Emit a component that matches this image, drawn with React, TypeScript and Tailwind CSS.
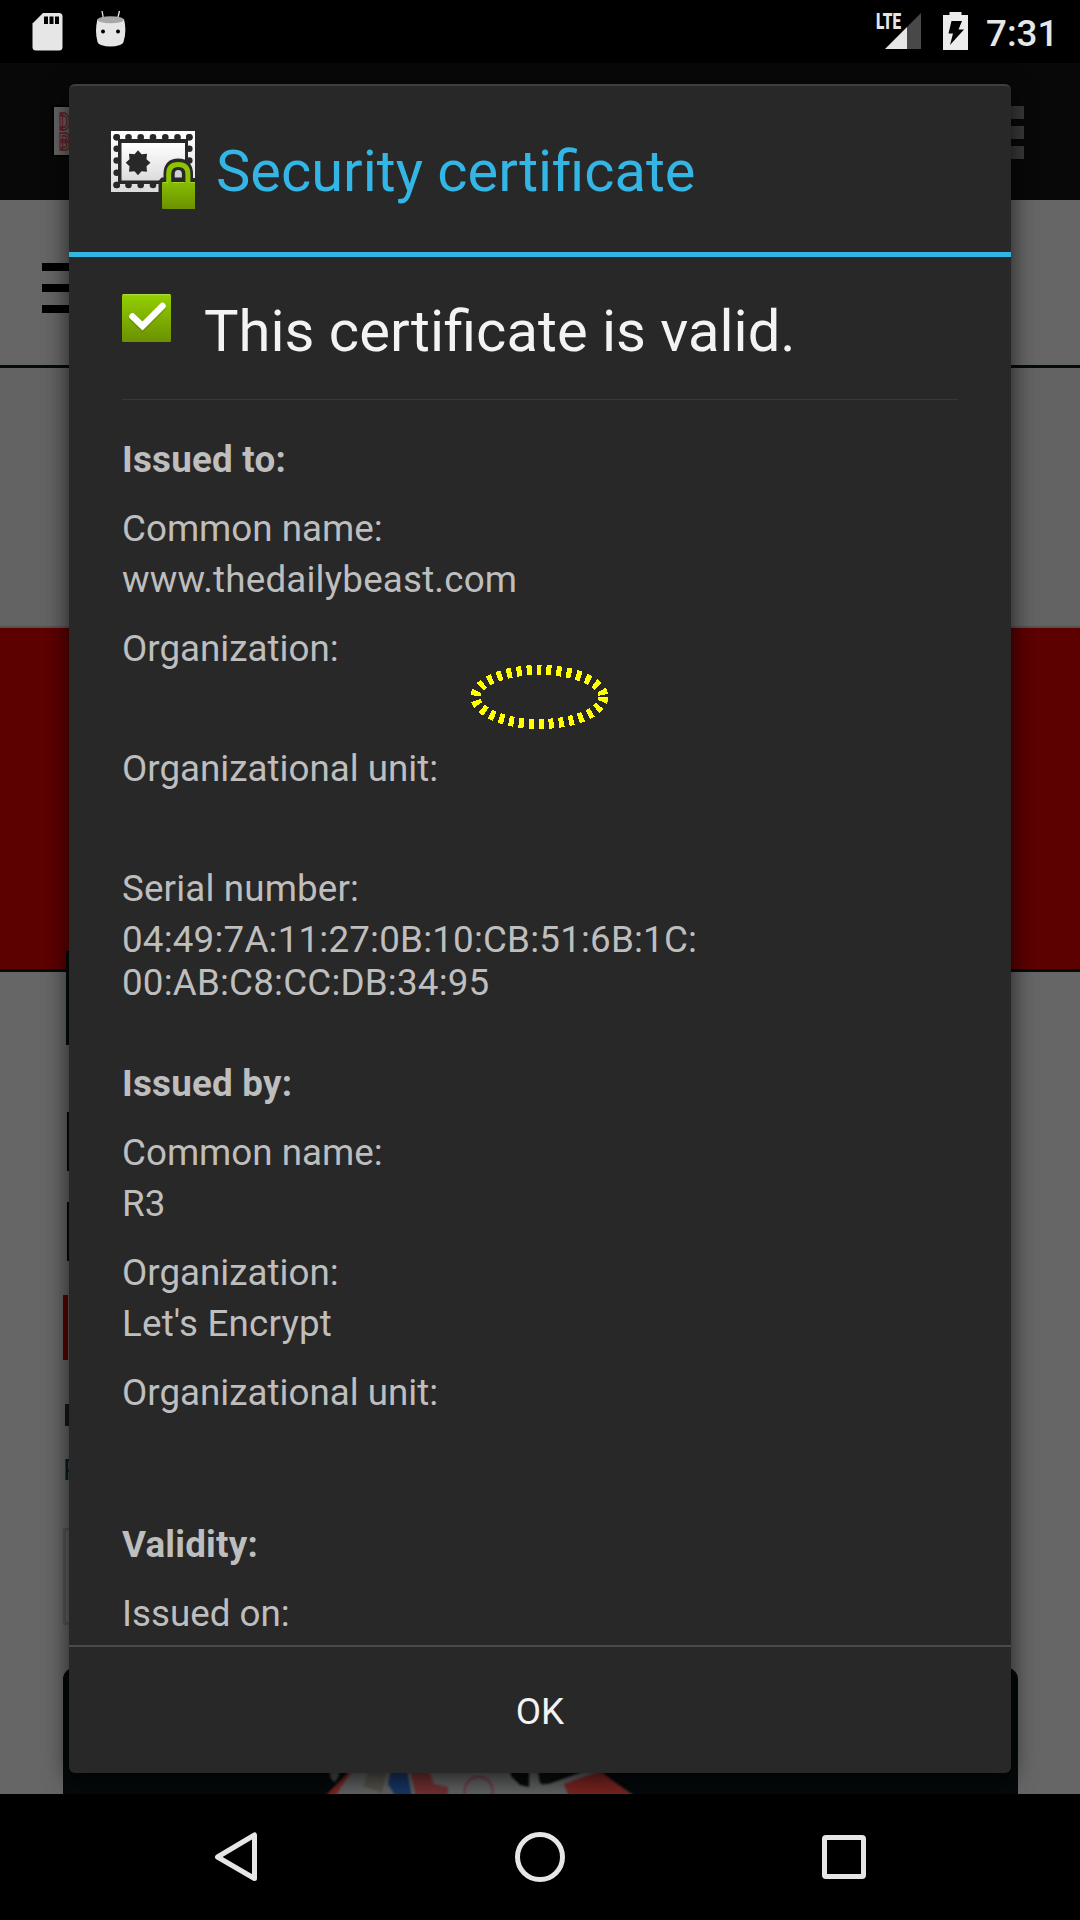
import React from "react";

type Line = { text: string; wide?: boolean };
type Entry = { label: string; wideLabel?: boolean; lines: Line[] };

const issuedTo: Entry[] = [
  { label: "Common name:", lines: [{ text: "www.thedailybeast.com", wide: true }] },
  { label: "Organization:", lines: [{ text: "" }] },
  { label: "Organizational unit:", lines: [{ text: "" }] },
  {
    label: "Serial number:",
    wideLabel: true,
    lines: [
      { text: "04:49:7A:11:27:0B:10:CB:51:6B:1C:", wide: true },
      { text: "00:AB:C8:CC:DB:34:95", wide: true },
    ],
  },
];
const issuedBy: Entry[] = [
  { label: "Common name:", lines: [{ text: "R3" }] },
  { label: "Organization:", lines: [{ text: "Let's Encrypt", wide: true }] },
  { label: "Organizational unit:", lines: [{ text: "" }] },
];
const validity: Entry[] = [{ label: "Issued on:", lines: [] }];

function Section({ title, entries }: { title: string; entries: Entry[] }) {
  return (
    <section className="flex flex-col gap-[26px]">
      <h3 className="font-bold tracking-[0.22px]">{title}</h3>
      {entries.map((e) => (
        <div key={e.label} className="flex flex-col gap-2">
          <div className={e.wideLabel ? "tracking-[0.15px]" : ""}>{e.label}</div>
          <div>
            {e.lines.map((l, i) => (
              <div key={i} className={l.wide ? "h-[43px] tracking-[0.19px]" : "h-[43px]"}>{l.text}</div>
            ))}
          </div>
        </div>
      ))}
    </section>
  );
}

function StatusBar() {
  return (
    <div className="flex h-[63px] shrink-0 items-start justify-between bg-black text-[#e6e6e6]">
      <div className="flex pt-[10px] pl-[32px]">
        <svg width="31" height="42" viewBox="0 0 31 42">
          <path d="M11 3H27q3.500 0 3.500 3.500V37q0 3.500-3.500 3.500H4Q.5 40.500.5 37V13.500Z" fill="#e6e6e6" />
          <path d="M12 6.500h4V14h-4zM17.500 6.500h4V14h-4zM23 6.500h4V14h-4z" fill="#000" />
        </svg>
        <svg className="ml-[32px]" width="31" height="42" viewBox="0 0 31 42">
          <path d="M7 1 8.500 9M24.500 1 22.500 9" stroke="#e6e6e6" strokeWidth="1.300" />
          <path d="M2.500 9Q-.5 21 2.500 32 3 34 6 35 15.500 38 25 35q3-1 3.500-3Q32 21 29 9Z" fill="#e6e6e6" />
          <ellipse cx="15.700" cy="9.700" rx="13.200" ry="3.500" fill="#a8a8a8" />
          <circle cx="8" cy="21.500" r="2" fill="#000" />
          <circle cx="23" cy="21.500" r="2" fill="#000" />
        </svg>
      </div>
      <div className="flex pr-[23px]">
        <svg className="mt-[10px]" width="48" height="42" viewBox="0 0 48 42">
          <path d="M45 3V39H31V17Z" fill="#484848" />
          <path d="M31 17V39H9Z" fill="#e6e6e6" />
          <text x="0" y="19" fontFamily="Roboto" fontWeight="900" fontSize="21.500" textLength="25" lengthAdjust="spacingAndGlyphs" fill="#e6e6e6">LTE</text>
        </svg>
        <svg className="mt-[12px] ml-[19px]" width="25" height="38" viewBox="0 0 25 38">
          <path d="M0 3H6.500V0H18.500V3H25V38H0Z" fill="#ececec" />
          <path d="M8.500 9H19L15.500 17.500H21L7 33 10 21.500H5.500Z" fill="#000" />
        </svg>
        <div className="ml-[18px] w-[71px] pt-[12px] text-[36.75px] leading-[44px] font-medium">7:31</div>
      </div>
    </div>
  );
}

function BackgroundPage() {
  return (
    <div className="flex h-[1731px] shrink-0 flex-col overflow-hidden bg-[#666666]">
      <div className="flex h-[137px] shrink-0 items-start justify-between bg-[#080808]">
        <div className="mt-[42px] ml-[52px] h-[52px] w-[60px] border-2 border-black bg-[#656565] pt-[3px] pl-[5px]">
          <svg width="40" height="44" viewBox="0 0 40 44" fill="none" stroke="#642020" strokeWidth="1.500">
            <text x="0" y="20" fontFamily="Roboto" fontWeight="700" fontSize="24" textLength="11" lengthAdjust="spacingAndGlyphs">D</text>
            <text x="0" y="40" fontFamily="Roboto" fontWeight="700" fontSize="24" textLength="11" lengthAdjust="spacingAndGlyphs">B</text>
          </svg>
        </div>
        <div className="mt-[43px] mr-[56px] flex flex-col gap-[7px]">
          <div className="h-[13px] w-[50px] bg-[#393939]" />
          <div className="h-[13px] w-[50px] bg-[#393939]" />
          <div className="h-[13px] w-[50px] bg-[#393939]" />
        </div>
      </div>
      <div className="flex h-[168px] shrink-0 flex-col gap-[13px] border-b-[3px] border-[#030b0d] pt-[63px] pl-[42px]">
        <div className="h-2 w-[50px] bg-black" />
        <div className="h-2 w-[50px] bg-black" />
        <div className="h-2 w-[50px] bg-black" />
      </div>
      <div className="h-[260px] shrink-0 border-b-2 border-[#575252] bg-[#636363]" />
      <div className="flex h-[344px] shrink-0 items-end border-b-[3px] border-[#030b0d] bg-[#5d0000] pl-[66px]">
        <div className="h-[18px] w-10 bg-[#030a0c]" />
      </div>
      <div className="flex shrink-0 flex-col items-start">
        <div className="ml-[66px] h-[73px] w-10 bg-[#030a0c]" />
        <div className="mt-[67px] ml-[67px] h-[59px] w-10 bg-[#030a0c]" />
        <div className="mt-[31px] ml-[67px] h-[59px] w-10 bg-[#030a0c]" />
        <div className="mt-[34px] ml-[63px] h-[65px] w-[5px] bg-[#5d0000]" />
        <div className="mt-[44px] ml-[65px] h-[22px] w-10 bg-[#14191c]" />
        <div className="mt-[34px] ml-[63px] h-[21px] text-[29.5px] leading-[21px] text-[#14191c]">P</div>
        <div className="mt-[47px] ml-[63px] h-[97px] w-[300px] border-[3px] border-[#565656]" />
      </div>
      <div className="mt-[43px] ml-[63px] flex h-[127px] w-[955px] shrink-0 items-end rounded-t-[11px] bg-[#05090a] pl-[247px]">
        <svg width="340" height="40" viewBox="0 0 340 40">
          <g filter="url(#soft)">
            <path d="M15 42 37 19 38 10H200l1 11 9 9 9 2V10h8l3 18 8 1 46-16 42 29Z" fill="#626463" />
            <path d="M20 16h9v5l-4 6q-6-3-5-11Z" fill="#4b4e4d" />
            <path d="M14 42 38 18 44 14 31 32 25 42Z" fill="#7c2522" />
            <path d="M60 14H77L72 38 53 31Z" fill="#56534a" />
            <path d="M81 15H97l5 27H86L78 29Z" fill="#163765" />
            <path d="M100 14h18l6 15 14 3v10h-32Z" fill="#753032" />
            <path d="M155 39a14 14 0 1 1 27 1" fill="none" stroke="#80203a" strokeWidth="1.500" />
            <path d="M228 14h36l-32 16Z" fill="#0b0d0e" />
            <path d="m254 29 36-13 35 26H259Z" fill="#7c2422" />
            <path d="M290 14 330 42H340V10H280Z" fill="#05090a" />
          </g>
          <defs>
            <filter id="soft" colorInterpolationFilters="sRGB"><feGaussianBlur stdDeviation="0.800" /></filter>
          </defs>
        </svg>
      </div>
    </div>
  );
}

const holesX = [5.7, 17.5, 29.7, 42, 54.3, 66.5, 78.3];
const holesY = [6.3, 17.7, 29.5, 41.7, 54];

function CertificateIcon() {
  return (
    <svg width="84" height="84" viewBox="0 0 84 84">
      <defs>
        <linearGradient id="paper" x1="0" y1="0" x2="0" y2="1">
          <stop offset="0" stopColor="#fff" />
          <stop offset="1" stopColor="#dcdcdc" />
        </linearGradient>
        <linearGradient id="lock" x1="0" y1="0" x2="0" y2="1">
          <stop offset="0" stopColor="#87bd00" />
          <stop offset="1" stopColor="#6c9100" />
        </linearGradient>
      </defs>
      <path d="M0 0H84V61H0Z" fill="url(#paper)" />
      <path d="M7 8H77V53H7Z" fill="#282828" />
      {holesX.map((x) => (
        <g key={x} fill="#282828">
          <circle cx={x} cy="6.300" r="3.300" />
          <circle cx={x} cy="54" r="3.300" />
        </g>
      ))}
      {holesY.map((y) => (
        <g key={y} fill="#282828">
          <circle cx="5.700" cy={y} r="3.300" />
          <circle cx="78.300" cy={y} r="3.300" />
        </g>
      ))}
      <rect x="10.500" y="12" width="63.500" height="37.500" fill="url(#paper)" />
      <path d="M27 19.200 30.500 23.200 36 22.700 35.500 28.200 39.500 31.700 35.500 35.200 36 40.700 30.500 40.200 27 44.200 23.500 40.200 18 40.700 18.500 35.200 14.700 31.700 18.500 28.200 18 22.700 23.500 23.200Z" fill="#282828" />
      <path d="M47.500 62V50l3-3.500h2V42q1-14.500 14.800-14.500T82 42v5h2V80H49Z" fill="#282828" />
      <path d="M63.700 46.500V43q0-4 3.600-4t3.600 4v3.500Z" fill="#d0d0d0" />
      <path d="M57.700 53V43q0-9.500 9.600-9.500t9.600 9.500v10" fill="none" stroke="#8cc400" strokeWidth="5" />
      <rect x="51" y="51" width="34" height="27" rx="1" fill="url(#lock)" />
      <path d="M52 51.500H57M62 51.500H73M79 51.500H84" stroke="#a4d52c" />
    </svg>
  );
}

function CheckIcon() {
  return (
    <svg width="50" height="50" viewBox="0 0 50 50">
      <defs>
        <linearGradient id="check" x1="0" y1="0" x2="0" y2="1">
          <stop offset="0" stopColor="#94d000" />
          <stop offset="1" stopColor="#6b9000" />
        </linearGradient>
      </defs>
      <rect width="49" height="48" rx="1.500" fill="url(#check)" />
      <path d="M1 .7H48" stroke="#aede48" strokeWidth="1" />
      <path d="M10.500 24 20.500 33.500 40.500 13.500" fill="none" stroke="#4f7400" strokeOpacity=".4" strokeWidth="7" strokeLinecap="round" />
      <path d="M10.500 22.500 20.500 32 40.500 12" fill="none" stroke="#fff" strokeWidth="6.500" strokeLinecap="round" />
    </svg>
  );
}

export default function App() {
  return (
    <div className="relative flex h-[1920px] w-[1080px] flex-col overflow-hidden bg-black font-['Roboto',sans-serif]">
      <StatusBar />
      <BackgroundPage />
      <div className="flex h-[126px] shrink-0 items-center bg-black">
        <svg className="ml-[213px]" width="48" height="54" viewBox="0 0 48 54">
          <path d="M41.500 5V48.500L4.500 27Z" fill="none" stroke="#e6e6e6" strokeWidth="5" strokeLinejoin="round" />
        </svg>
        <div className="ml-[254px] size-[50px] rounded-full border-[5.500px] border-[#e6e6e6]" />
        <div className="ml-[257px] size-[44px] rounded-[4px] border-[5px] border-[#e6e6e6]" />
      </div>

      <div className="absolute top-[84px] left-[69px] flex h-[1689px] w-[942px] flex-col rounded-[6px] border-t-2 border-[#3f3f3f] bg-[#282828] shadow-[0_6px_24px_rgba(0,0,0,0.7)]">
        <header className="flex h-[171px] shrink-0 border-b-[5px] border-[#33b5e5] pl-[42px]">
          <div className="pt-[45px]"><CertificateIcon /></div>
          <h1 className="ml-[21px] pt-[51px] text-[57.8px] leading-[68px] text-[#33b5e5]">Security certificate</h1>
        </header>
        <main className="h-[1388px] shrink-0 overflow-hidden px-[53px]">
          <div className="flex h-[143px] border-b border-[#383838]">
            <div className="pt-[37px]"><CheckIcon /></div>
            <h2 className="ml-[32px] pt-[40px] text-[57.95px] leading-[68px] text-[#f3f3f3]">This certificate is valid.</h2>
          </div>
          <div className="flex flex-col gap-[58px] pt-[38px] text-[36.75px] leading-[43px] text-[#bebebe]">
            <Section title="Issued to:" entries={issuedTo} />
            <Section title="Issued by:" entries={issuedBy} />
            <Section title="Validity:" entries={validity} />
          </div>
        </main>
        <button className="flex h-[128px] shrink-0 items-center justify-center border-t-2 border-[#4a4a4a] pt-[2px] text-[36.75px] leading-[43px] text-[#f3f3f3]">OK</button>
      </div>

      <svg className="absolute top-[664px] left-[470px]" width="140" height="66" viewBox="0 0 140 66" shapeRendering="crispEdges">
        <ellipse cx="69.500" cy="33" rx="64" ry="27" fill="none" stroke="#ffff00" strokeWidth="10" strokeDasharray="5 5" />
      </svg>
    </div>
  );
}
